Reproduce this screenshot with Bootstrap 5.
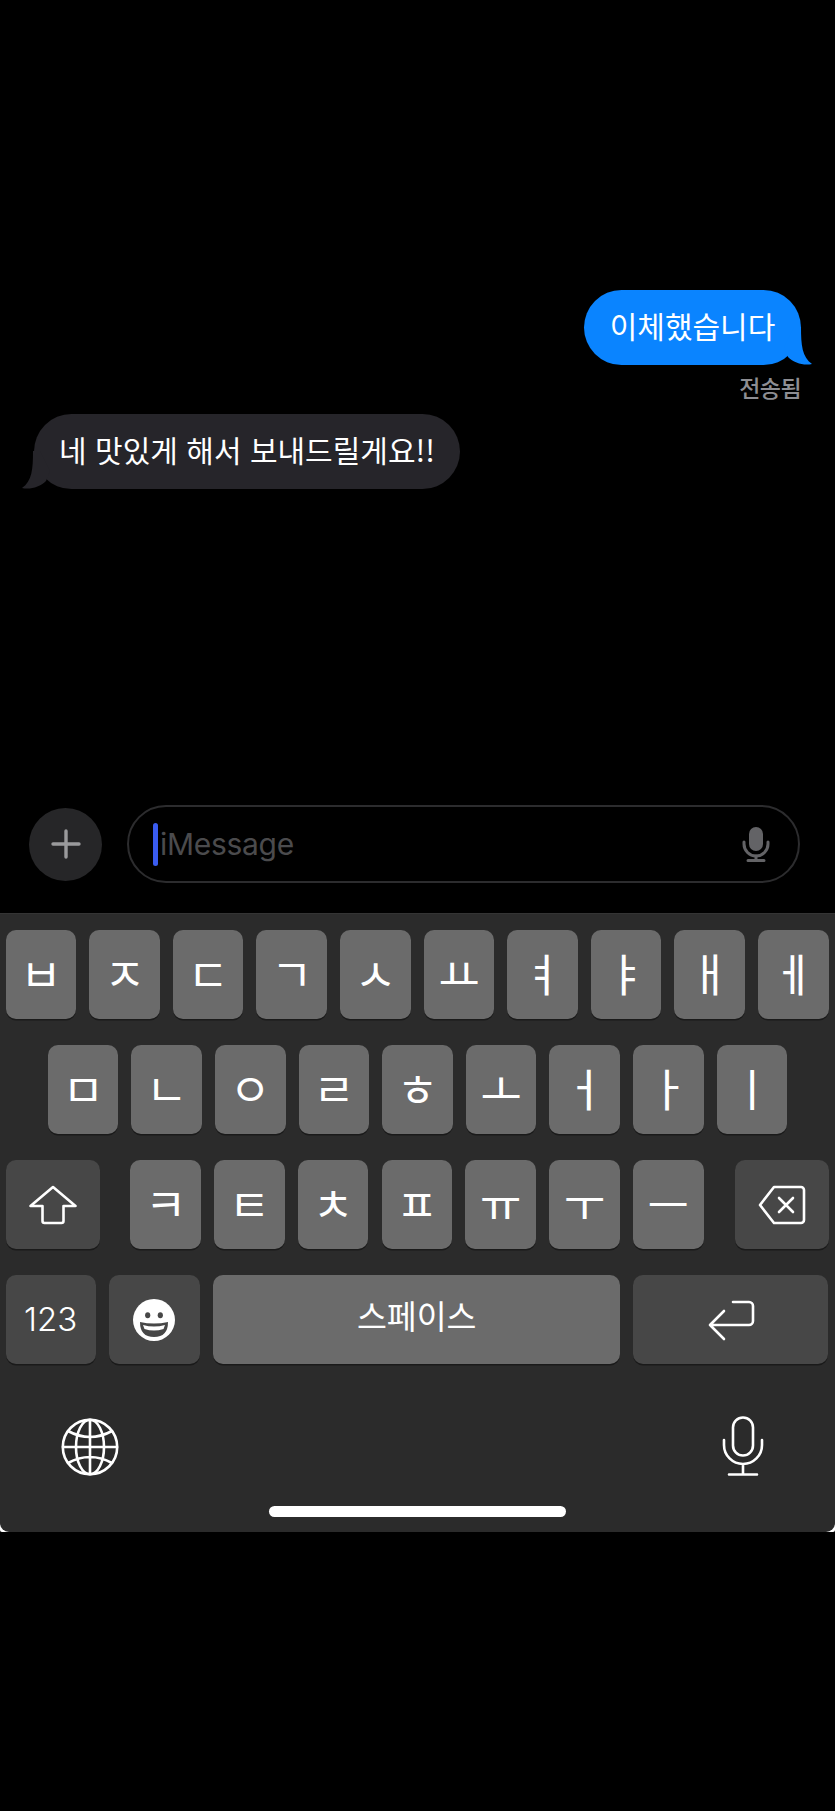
<!doctype html>
<html lang="ko">
<head>
<meta charset="utf-8">
<title>iMessage</title>
<link href="https://cdn.jsdelivr.net/npm/bootstrap@5.3.0/dist/css/bootstrap.min.css" rel="stylesheet">
<style>
html,body{background:#000;margin:0}
body{width:835px;height:1811px;overflow:hidden;font-family:"Noto Sans CJK KR","Liberation Sans",sans-serif;color:#fff}
.thread{height:805px;padding-top:290px}
.bubble-msg{position:relative;height:75px;border-radius:37.5px;font-size:30px;line-height:70px;white-space:nowrap;text-align:center}
.bubble-out{background:#0a84ff;margin-right:34px;width:217px}
.bubble-in{background:#26252a;margin-left:34px;width:426px}
.tail{position:absolute;bottom:0;width:28px;height:38px}
.bubble-out .tail{right:-11px;fill:#0a84ff}
.bubble-in .tail{left:-12px;fill:#26252a;transform:scaleX(-1)}
.status{color:#8e8e93;font-size:23px;line-height:26px;margin:9px 34px 14px 0;font-weight:500;text-align:right;letter-spacing:-.6px}
.composer{height:78px;padding:0 35px 0 29px;gap:25px}
.plus-btn{width:73px;height:73px;border-radius:50%;background:#262628;flex:none;border:0}
.entry{height:78px;border:2px solid #2c2c2e;border-radius:39px;padding:0 28px 0 24px}
.caret-bar{width:5px;height:43px;border-radius:3px;background:#3a5cf0;flex:none}
.entry-text{font-family:Inter,"Liberation Sans",sans-serif;font-size:30px;color:#4b4b4d;margin-left:2px;letter-spacing:-.3px}
.kbd-shell{margin-top:30px;height:619px;background:linear-gradient(transparent 600px,#fff 600px);border-radius:0 0 2px 2px}
.kbd-panel{height:619px;background:#2b2b2b;border-top:1px solid #343434;border-radius:0 0 9px 9px;padding-top:16px}
.key-row{height:89px;margin-bottom:26px;padding:0 5.7px;gap:13px}
.keycap{flex:none;width:70.6px;height:89px;border-radius:10px;background:#6b6b6b;box-shadow:0 1.5px 0 #1a1a1a;color:#fff;font-size:45px;line-height:1;padding:0 0 4px;border:0}
.keycap-dark{background:#474747;padding:0}
.w-shift{width:94px}
.w-num{width:90px}
.w-emoji{width:91.5px}
.w-space{width:407px;font-size:32.5px;padding:0}
.w-return{width:195.1px}
.key-group{gap:13.2px;margin-left:17.6px}
.num-text{font-family:Inter,"Liberation Sans",sans-serif;font-weight:300;font-size:33px}
.space-text{position:relative;top:-4px}
.last-row{margin-bottom:52px}
.bottom-row{padding:0 71px 0 61px}
.home-pill{width:297px;height:11px;border-radius:6px;background:#fff;margin:30px auto 0}
.ic{fill:none;stroke:#fff;stroke-width:2.6;stroke-linecap:round;stroke-linejoin:round}
</style>
</head>
<body>
<main class="d-flex flex-column">
  <section class="thread d-flex flex-column">
    <div class="bubble-msg bubble-out align-self-end">이체했습니다
      <svg class="tail" viewBox="0 0 28 38"><path d="M17 0C17 18 18 30 28 37C20 39 10 36 4 30L0 20L10 0Z"/></svg>
    </div>
    <div class="status">전송됨</div>
    <div class="bubble-msg bubble-in align-self-start">네 맛있게 해서 보내드릴게요!!
      <svg class="tail" viewBox="0 0 28 38"><path d="M17 0C17 18 18 30 28 37C20 39 10 36 4 30L0 20L10 0Z"/></svg>
    </div>
  </section>

  <section class="composer d-flex align-items-center">
    <button class="plus-btn d-flex align-items-center justify-content-center" aria-label="추가">
      <svg width="30" height="30" viewBox="0 0 30 30"><path d="M15 2V28M2 15H28" stroke="#9a9a9c" stroke-width="3.4" stroke-linecap="round"/></svg>
    </button>
    <div class="entry flex-grow-1 d-flex align-items-center">
      <span class="caret-bar"></span>
      <span class="entry-text flex-grow-1">iMessage</span>
      <svg width="28" height="35" viewBox="0 0 28 35"><rect x="7" y="0" width="14" height="24" rx="7" fill="#636366"/><path d="M2 15V17A12 12 0 0 0 26 17V15" fill="none" stroke="#636366" stroke-width="3" stroke-linecap="round"/><path d="M14 29V33M6 33.5H22" stroke="#636366" stroke-width="3" stroke-linecap="round"/></svg>
    </div>
  </section>

  <div class="kbd-shell">
  <section class="kbd-panel">
    <div class="key-row d-flex">
      <button class="keycap">ㅂ</button><button class="keycap">ㅈ</button><button class="keycap">ㄷ</button><button class="keycap">ㄱ</button><button class="keycap">ㅅ</button><button class="keycap">ㅛ</button><button class="keycap">ㅕ</button><button class="keycap">ㅑ</button><button class="keycap">ㅐ</button><button class="keycap">ㅔ</button>
    </div>
    <div class="key-row d-flex justify-content-center">
      <button class="keycap">ㅁ</button><button class="keycap">ㄴ</button><button class="keycap">ㅇ</button><button class="keycap">ㄹ</button><button class="keycap">ㅎ</button><button class="keycap">ㅗ</button><button class="keycap">ㅓ</button><button class="keycap">ㅏ</button><button class="keycap">ㅣ</button>
    </div>
    <div class="key-row d-flex">
      <button class="keycap keycap-dark w-shift d-flex align-items-center justify-content-center" aria-label="shift">
        <svg class="ic" width="48" height="40" viewBox="0 0 48 40"><path d="M24 2L46.5 21H34.5V36A2 2 0 0 1 32.5 38H15.5A2 2 0 0 1 13.5 36V21H1.5Z"/></svg>
      </button>
      <div class="key-group d-flex">
        <button class="keycap">ㅋ</button><button class="keycap">ㅌ</button><button class="keycap">ㅊ</button><button class="keycap">ㅍ</button><button class="keycap">ㅠ</button><button class="keycap">ㅜ</button><button class="keycap">ㅡ</button>
      </div>
      <button class="keycap keycap-dark w-shift d-flex align-items-center justify-content-center ms-auto" aria-label="delete">
        <svg class="ic" width="48" height="40" viewBox="0 0 48 40"><path d="M16 2H43A3 3 0 0 1 46 5V35A3 3 0 0 1 43 38H16L2 20Z"/><path d="M21 13L35 27M35 13L21 27"/></svg>
      </button>
    </div>
    <div class="key-row last-row d-flex">
      <button class="keycap keycap-dark w-num num-text">123</button>
      <button class="keycap keycap-dark w-emoji d-flex align-items-center justify-content-center" aria-label="emoji">
        <svg width="42" height="42" viewBox="0 0 42 42"><circle cx="21" cy="21" r="21" fill="#fff"/><ellipse cx="14.700" cy="16.300" rx="2.600" ry="3" fill="#474747"/><ellipse cx="27.300" cy="16.300" rx="2.600" ry="3" fill="#474747"/><path d="M7 23Q21 26 35 23Q35 38 21 38Q7 38 7 23Z" fill="#474747"/><path d="M10 26Q21 29 32 26L30.500 30Q21 33 11.500 30Z" fill="#fff"/></svg>
      </button>
      <button class="keycap w-space"><span class="space-text">스페이스</span></button>
      <button class="keycap keycap-dark w-return d-flex align-items-center justify-content-center" aria-label="return">
        <svg class="ic" width="48" height="42" viewBox="0 0 48 42"><path d="M26 3H42A4 4 0 0 1 46 7V22A4 4 0 0 1 42 26H3M17 12L3 26L17 40"/></svg>
      </button>
    </div>
    <div class="bottom-row d-flex justify-content-between align-items-end">
      <svg class="ic" width="58" height="58" viewBox="0 0 58 58"><circle cx="29" cy="29" r="27.200"/><ellipse cx="29" cy="29" rx="14" ry="27.200"/><path d="M29 2V56M2 29H56M7 13Q29 25 51 13M7 45Q29 33 51 45"/></svg>
      <svg class="ic" width="42" height="60" viewBox="0 0 42 60"><rect x="11" y="1.500" width="20" height="38" rx="10"/><path d="M2 24V29A19 19 0 0 0 40 29V24M21 48V58M7 58.500H35"/></svg>
    </div>
    <div class="home-pill"></div>
  </section>
  </div>
</main>
<script src="https://cdn.jsdelivr.net/npm/bootstrap@5.3.0/dist/js/bootstrap.bundle.min.js"></script>
</body>
</html>
